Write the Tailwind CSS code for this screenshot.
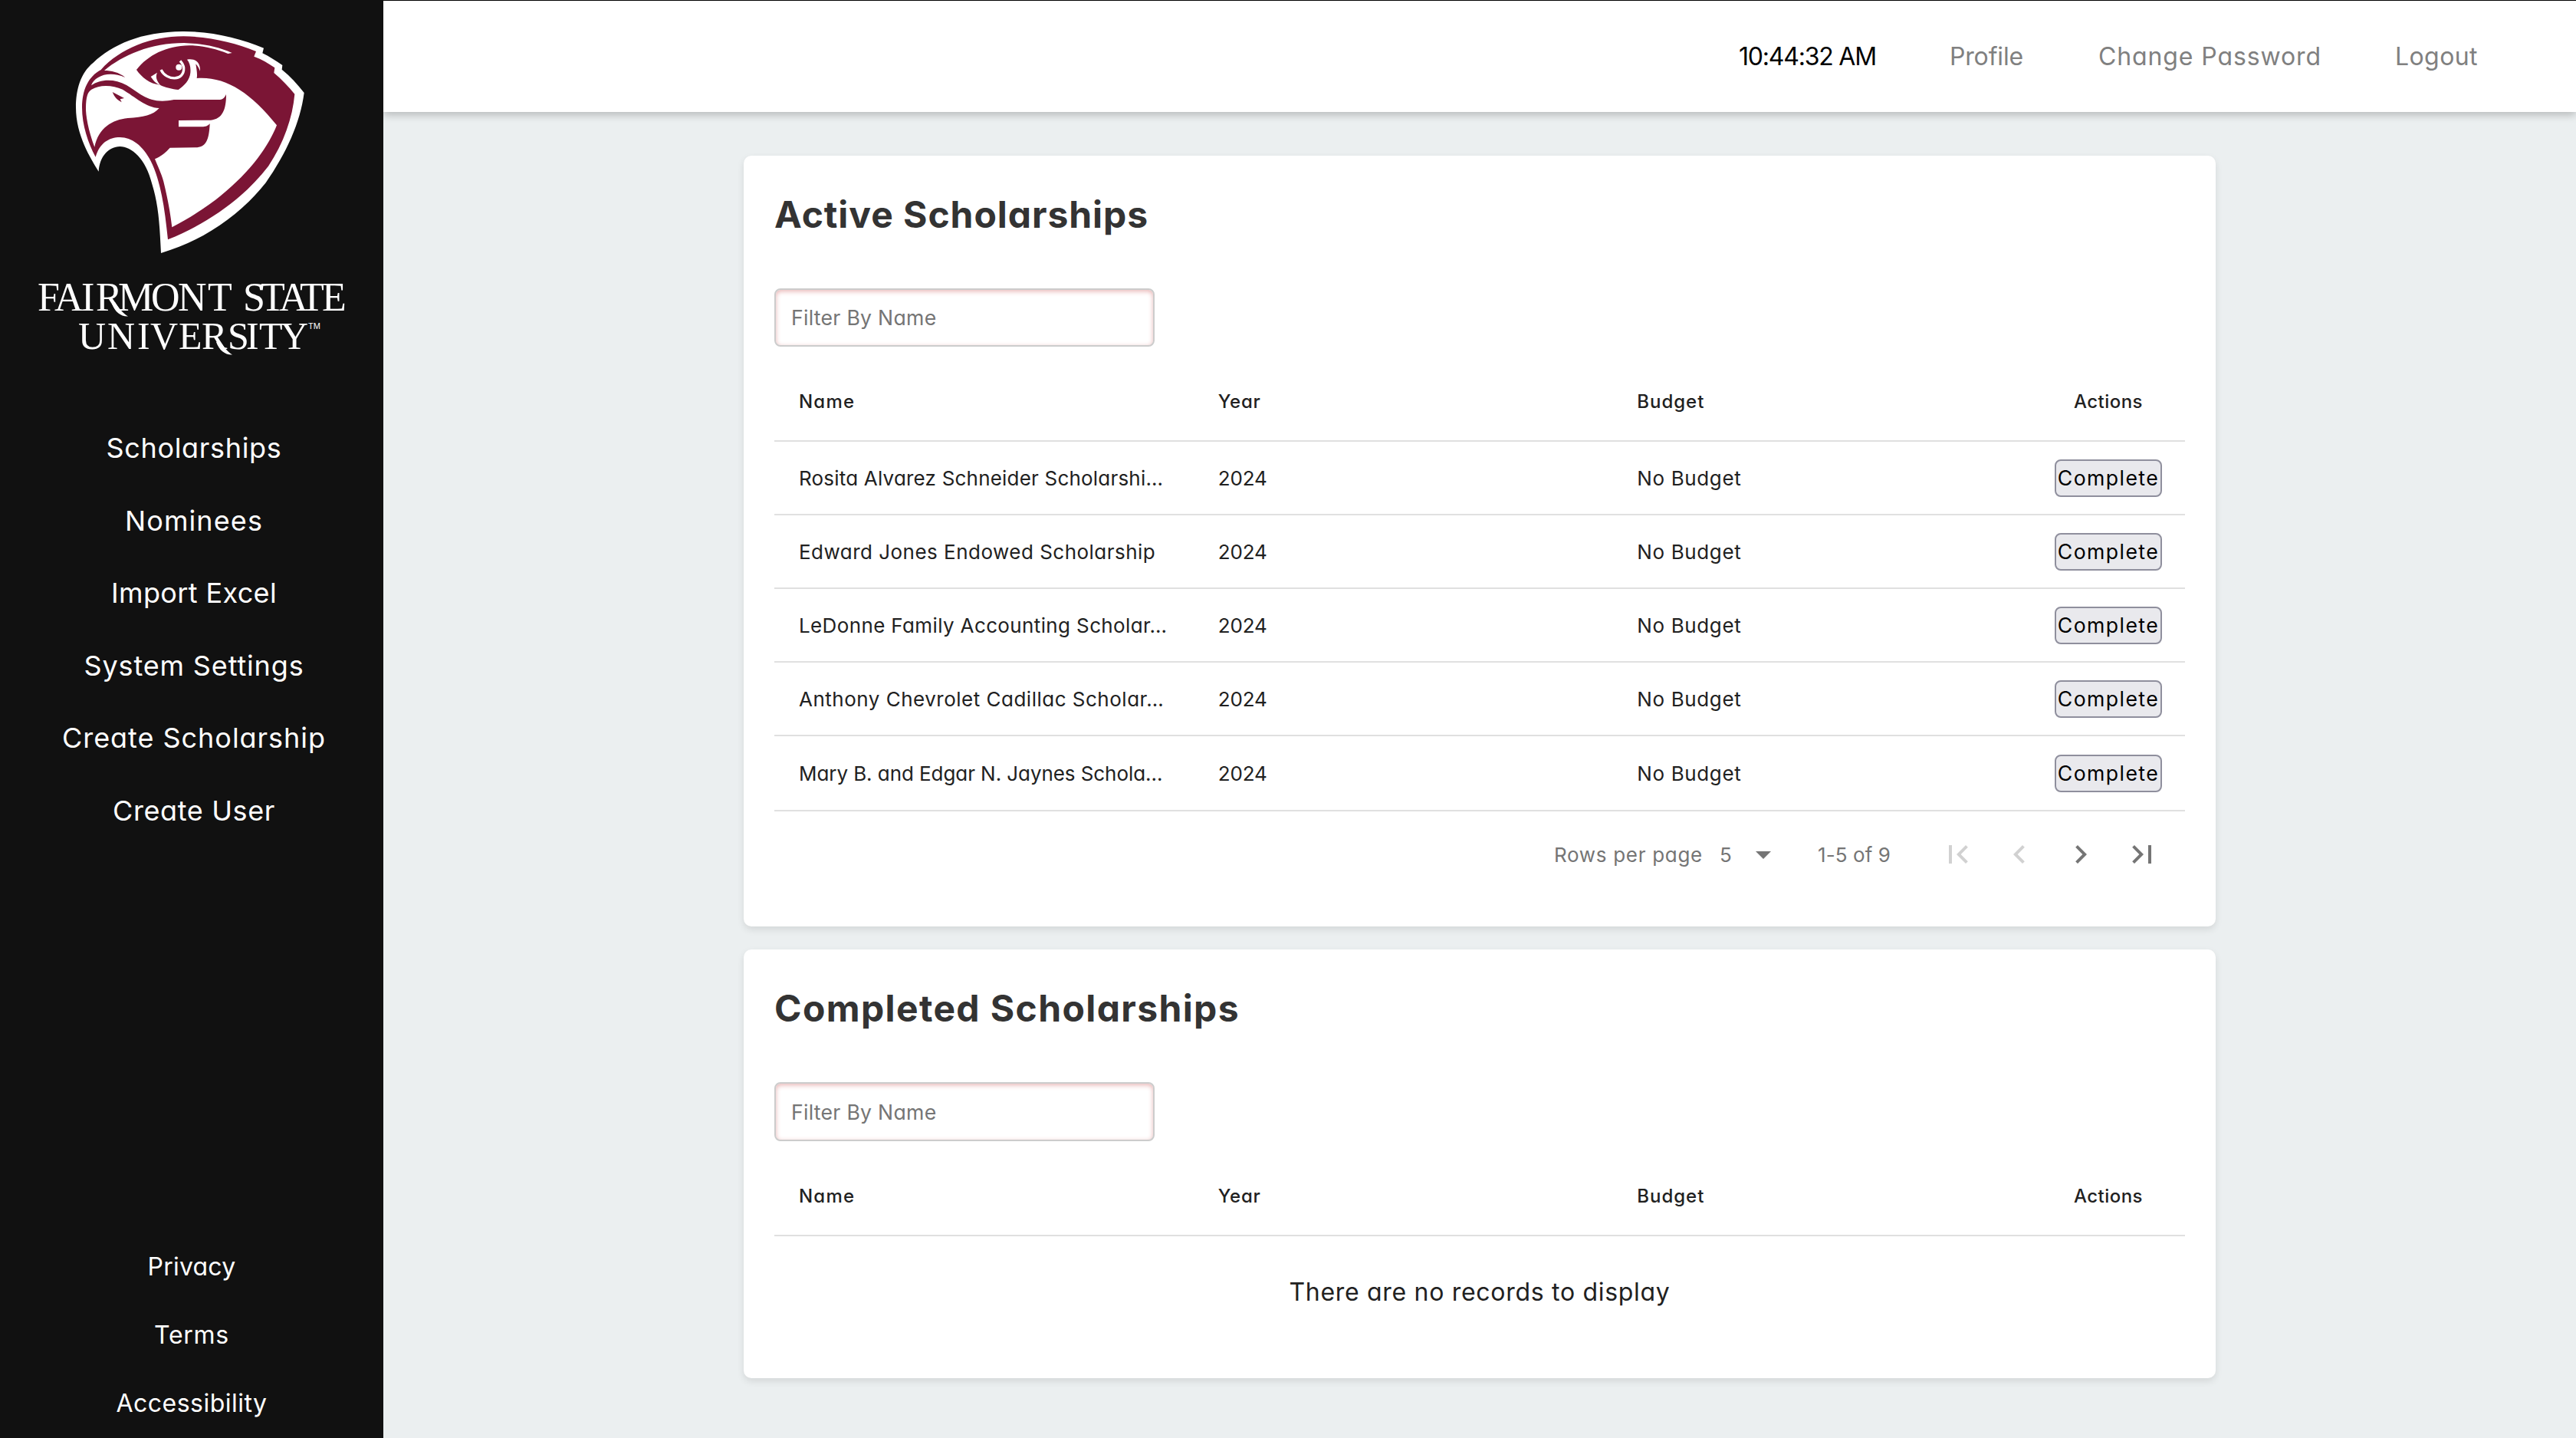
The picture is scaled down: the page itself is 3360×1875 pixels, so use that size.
<!DOCTYPE html>
<html lang="en">
<head>
<meta charset="utf-8">
<title>Scholarships</title>
<script src="https://cdn.jsdelivr.net/npm/@tailwindcss/browser@4"></script>
</head>
<body class="flex h-[1875px] w-[3360px] overflow-hidden bg-[#ebeff0] font-['Inter',sans-serif] [font-feature-settings:'cv11'] whitespace-nowrap">

<!-- Sidebar -->
<aside class="z-10 flex w-[500px] shrink-0 flex-col bg-[#111] text-white">
  <svg class="h-[500px] w-[500px] shrink-0" viewBox="0 0 500 500" aria-label="Fairmont State University">
    <g transform="translate(80 20) scale(.33333)">
      <path fill="#fff" d="M146 611C115 560 57 470 57 360C57 290 75 225 125 185C200 115 310 64 475 63C590 62 700 90 792 128L787 148C815 162 840 178 865 195L863 212C895 238 925 270 950 303C935 420 880 540 800 655C700 780 560 880 390 930C385 820 380 740 355 660C330 560 275 513 229 513C185 515 150 550 146 611Z"/>
      <path fill="#7b1535" d="M134 554C105 500 81 430 81 360C82 290 105 240 155 213C230 130 350 82 478 82C580 83 680 107 762 141L754 161C785 172 810 188 835 205L832 225C862 250 890 280 913 308C905 400 870 500 810 590C710 720 570 815 417 877C405 760 390 650 350 570C320 510 275 477 230 477C185 477 150 500 134 554Z"/>
      <path fill="#fff" d="M168 216C240 155 350 108 480 108C550 110 610 122 668 147L652 150C600 130 550 118 500 118C410 120 340 155 294 213C315 243 345 268 386 272C405 282 435 288 458 291C480 277 503 252 505 225C507 205 503 185 492 173C520 168 545 180 543 218C539 207 533 197 526 190C529 210 533 230 530 246C640 238 740 300 843 430C800 540 680 700 433 829C425 760 412 700 400 650C392 620 375 585 366 562C390 552 410 535 425 518L525 517C565 517 578 490 581 424C572 433 565 436 550 436L459 436L459 411L585 410C630 405 645 370 645 309C638 325 630 330 615 330L440 330C345 350 310 306 255 273C205 245 150 250 117 274C130 238 185 215 250 243C225 222 195 216 168 216Z"/>
      <path fill="#fff" d="M130 515C105 450 95 390 96 360C97 320 102 300 118 290C150 270 200 272 240 290C290 320 330 360 383 363C360 390 320 398 260 402C200 408 145 440 130 515Z"/>
      <path fill="#7b1535" d="M200 300L246 324L230 328L236 340C218 330 208 320 200 300Z"/>
      <path fill="#fff" d="M350 240L375 224C368 240 372 255 388 273C370 268 360 255 350 240Z"/>
      <path fill="none" stroke="#fff" stroke-width="10" d="M390 213C412 258 482 258 479 205C478 195 473 187 465 178"/>
      <circle fill="#fff" cx="460" cy="203" r="12"/>
    </g>
    <g class="fill-white font-['Liberation_Serif',serif]">
      <text class="text-[52px]" y="405" x="49 71 106 125 154 197 232 271 300 317 340 364 391 420">FAIRMONT STATE</text>
      <path d="M150 394C155 402 161 409 167 412.500C158 413 150 407 146 396Z"/>
      <text class="text-[50px]" y="454.500" x="102 140 179 196 233 263 297 321 338 366">UNIVERSITY</text>
      <path d="M286 444C292 452 297 459 303 462.500C294 463 286 457 282 446Z"/>
      <text class="font-['Liberation_Sans',sans-serif] text-[11px]" x="402" y="428.500">TM</text>
    </g>
  </svg>
  <nav class="mt-[37px] flex flex-col pl-1.5 text-center text-[36px]">
    <a class="h-[94.6px] leading-[94.6px] tracking-[.67px]">Scholarships</a>
    <a class="h-[94.6px] leading-[94.6px] tracking-[1.1px]">Nominees</a>
    <a class="h-[94.6px] leading-[94.6px] tracking-[.37px]">Import Excel</a>
    <a class="h-[94.6px] leading-[94.6px] tracking-[.85px]">System Settings</a>
    <a class="h-[94.6px] leading-[94.6px] tracking-[.96px]">Create Scholarship</a>
    <a class="h-[94.6px] leading-[94.6px] tracking-[.62px]">Create User</a>
  </nav>
  <footer class="mt-auto flex flex-col pb-px text-center text-[32px] leading-[89px]">
    <a class="tracking-[.24px]">Privacy</a>
    <a class="tracking-[.74px]">Terms</a>
    <a class="tracking-[.48px]">Accessibility</a>
  </footer>
</aside>

<div class="flex min-w-0 flex-1 flex-col">
  <!-- Top bar -->
  <header class="flex h-[146px] items-center justify-end gap-24 border-t border-black bg-white pt-px pr-32 text-[32px] text-[#808080] shadow-[0_4px_10px_rgba(0,0,0,0.22)]">
    <span class="tracking-[-1.2px] text-black">10:44:32 AM</span>
    <a class="mr-0.5 tracking-[-.16px]">Profile</a>
    <a class="tracking-[.89px]">Change Password</a>
    <a class="tracking-[.42px]">Logout</a>
  </header>

  <main class="mt-[57px] ml-[470px] flex w-[1920px] flex-col gap-[30px] text-[#212121]">
    <section class="h-[1005px] rounded-[10px] bg-white px-10 pt-[41px] shadow-[0_4px_10px_rgba(0,0,0,0.1)]">
      <h2 class="h-[72px] text-[48px] leading-[72px] font-bold tracking-[.94px] text-[#333]">Active Scholarships</h2>
      <input class="mt-[60px] block h-[76px] w-[496px] rounded-lg border-2 border-[#ccc] px-5 text-[26.67px] tracking-[.26px] shadow-[inset_0_2px_6px_#e9b5b5] placeholder:text-[#757575]" placeholder="Filter By Name">
      <div class="mt-5 grid h-[104px] grid-cols-[546.67px_546.67px_546.67px_200px] items-center border-b-2 border-[#e0e0e0] pt-0.5 text-[24px] font-medium">
        <span class="pl-8 tracking-[1.2px]">Name</span><span class="pl-8 tracking-[.79px]">Year</span><span class="pl-8 tracking-[.97px]">Budget</span><span class="text-center tracking-[.46px]">Actions</span>
      </div>
      <div class="grid h-24 grid-cols-[546.67px_546.67px_546.67px_200px] items-center border-b-2 border-[#e0e0e0] text-[26px]">
        <span class="pl-8 tracking-[.2px]">Rosita Alvarez Schneider Scholarshi…</span><span class="pl-8 tracking-[-.13px]">2024</span><span class="pl-8 tracking-[.62px]">No Budget</span>
        <button class="h-[49px] w-[140px] justify-self-center rounded-lg border-2 border-[#8f8f9d] bg-[#e9e9ed] text-[26.67px] leading-none tracking-[1.4px] text-black">Complete</button>
      </div>
      <div class="grid h-24 grid-cols-[546.67px_546.67px_546.67px_200px] items-center border-b-2 border-[#e0e0e0] text-[26px]">
        <span class="pl-8 tracking-[.48px]">Edward Jones Endowed Scholarship</span><span class="pl-8 tracking-[-.13px]">2024</span><span class="pl-8 tracking-[.62px]">No Budget</span>
        <button class="h-[49px] w-[140px] justify-self-center rounded-lg border-2 border-[#8f8f9d] bg-[#e9e9ed] text-[26.67px] leading-none tracking-[1.4px] text-black">Complete</button>
      </div>
      <div class="grid h-24 grid-cols-[546.67px_546.67px_546.67px_200px] items-center border-b-2 border-[#e0e0e0] text-[26px]">
        <span class="pl-8 tracking-[.37px]">LeDonne Family Accounting Scholar…</span><span class="pl-8 tracking-[-.13px]">2024</span><span class="pl-8 tracking-[.62px]">No Budget</span>
        <button class="h-[49px] w-[140px] justify-self-center rounded-lg border-2 border-[#8f8f9d] bg-[#e9e9ed] text-[26.67px] leading-none tracking-[1.4px] text-black">Complete</button>
      </div>
      <div class="grid h-24 grid-cols-[546.67px_546.67px_546.67px_200px] items-center border-b-2 border-[#e0e0e0] text-[26px]">
        <span class="pl-8 tracking-[.5px]">Anthony Chevrolet Cadillac Scholar…</span><span class="pl-8 tracking-[-.13px]">2024</span><span class="pl-8 tracking-[.62px]">No Budget</span>
        <button class="h-[49px] w-[140px] justify-self-center rounded-lg border-2 border-[#8f8f9d] bg-[#e9e9ed] text-[26.67px] leading-none tracking-[1.4px] text-black">Complete</button>
      </div>
      <div class="grid h-[98px] grid-cols-[546.67px_546.67px_546.67px_200px] items-center border-b-2 border-[#e0e0e0] text-[26px]">
        <span class="pl-8 tracking-[-.07px]">Mary B. and Edgar N. Jaynes Schola…</span><span class="pl-8 tracking-[-.13px]">2024</span><span class="pl-8 tracking-[.62px]">No Budget</span>
        <button class="h-[49px] w-[140px] justify-self-center rounded-lg border-2 border-[#8f8f9d] bg-[#e9e9ed] text-[26.67px] leading-none tracking-[1.4px] text-black">Complete</button>
      </div>
      <!-- Pagination -->
      <div class="flex h-28 items-center justify-end pr-4 text-[26px] text-[#757575]">
        <span class="tracking-[.7px]">Rows per page</span>
        <span class="ml-[22px] w-[33px]">5</span>
        <svg class="mr-[47px] size-12" viewBox="0 0 24 24" fill="currentColor"><path d="M7 10l5 5 5-5z"/></svg>
        <span class="mr-12 tracking-[.09px]">1-5 of 9</span>
        <span class="flex w-20 justify-center text-[#d1d1d1]"><svg class="size-12" viewBox="0 0 24 24" fill="currentColor"><path d="M18.41 16.59L13.82 12l4.59-4.59L17 6l-6 6 6 6zM6 6h2v12H6z"/></svg></span>
        <span class="flex w-20 justify-center text-[#d1d1d1]"><svg class="size-12" viewBox="0 0 24 24" fill="currentColor"><path d="M15.41 7.41L14 6l-6 6 6 6 1.41-1.41L10.83 12z"/></svg></span>
        <span class="flex w-20 justify-center"><svg class="size-12" viewBox="0 0 24 24" fill="currentColor"><path d="M10 6L8.59 7.41 13.17 12l-4.58 4.59L10 18l6-6z"/></svg></span>
        <span class="flex w-20 justify-center"><svg class="size-12" viewBox="0 0 24 24" fill="currentColor"><path d="M5.59 7.41L10.18 12l-4.59 4.59L7 18l6-6-6-6zM16 6h2v12h-2z"/></svg></span>
      </div>
    </section>

    <section class="h-[559px] rounded-[10px] bg-white px-10 pt-[41px] shadow-[0_4px_10px_rgba(0,0,0,0.1)]">
      <h2 class="h-[72px] text-[48px] leading-[72px] font-bold tracking-[1.38px] text-[#333]">Completed Scholarships</h2>
      <input class="mt-[60px] block h-[77px] w-[496px] rounded-lg border-2 border-[#ccc] px-5 text-[26.67px] tracking-[.26px] shadow-[inset_0_2px_6px_#e9b5b5] placeholder:text-[#757575]" placeholder="Filter By Name">
      <div class="mt-5 grid h-[104px] grid-cols-[546.67px_546.67px_546.67px_200px] items-center border-b-2 border-[#e0e0e0] pt-0.5 text-[24px] font-medium">
        <span class="pl-8 tracking-[1.2px]">Name</span><span class="pl-8 tracking-[.79px]">Year</span><span class="pl-8 tracking-[.97px]">Budget</span><span class="text-center tracking-[.46px]">Actions</span>
      </div>
      <p class="pt-px text-center text-[32px] leading-[144px] tracking-[.7px]">There are no records to display</p>
    </section>
  </main>
</div>
</body>
</html>
